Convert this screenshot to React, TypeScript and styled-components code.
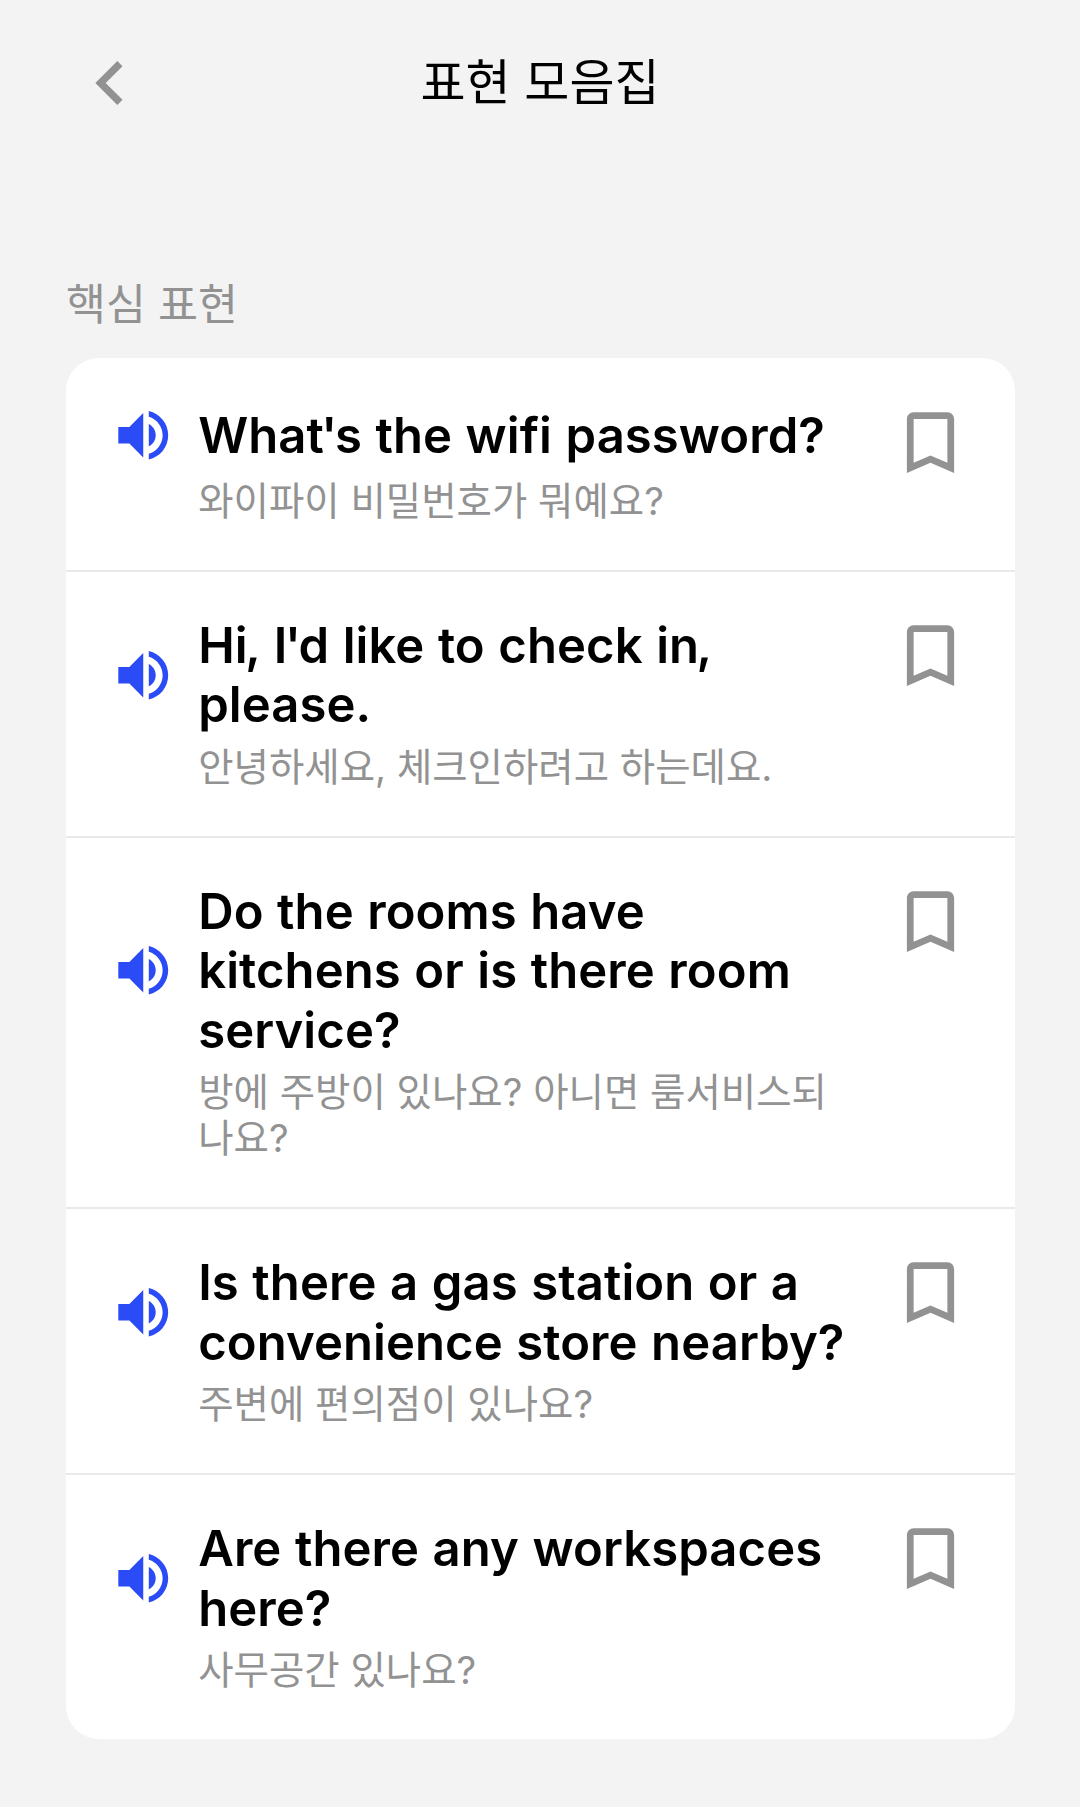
import React from "react";
import styled, { createGlobalStyle } from "styled-components";

const GlobalStyle = createGlobalStyle`
  body {
    margin: 0;
    background: #f3f3f3;
  }
`;

const Screen = styled.div`
  box-sizing: border-box;
  min-height: 1807px;
  background: #f3f3f3;
  font-family: Inter, "Noto Sans CJK KR", sans-serif;
  color: #000;
`;

const Header = styled.header`
  display: grid;
  grid-template-columns: 88px 1fr 88px;
  align-items: center;
  padding: 39px 66px 0;
  height: 88px;
`;

const IconButton = styled.button`
  display: flex;
  padding: 0;
  border: 0;
  background: none;
  color: #929292;
`;

const Icon = styled.svg<{ $size: number }>`
  display: block;
  flex: none;
  width: ${(p) => p.$size}px;
  height: ${(p) => p.$size}px;
  fill: currentColor;
`;

const Title = styled.h1`
  margin: 0;
  font-size: 49px;
  line-height: 60px;
  font-weight: 400;
  text-align: center;
`;

const Section = styled.section`
  padding: 147px 65px 0 66px;
`;

const SectionLabel = styled.h2`
  margin: 0;
  font-size: 43.4px;
  line-height: 60px;
  font-weight: 400;
  color: #929292;
`;

const Card = styled.ul`
  margin: 24px 0 0;
  padding: 0;
  list-style: none;
  background: #fff;
  border-radius: 33px;
`;

const Row = styled.li`
  display: flex;
  align-items: flex-start;
  justify-content: space-between;
  padding: 44.1px 44px 46.3px 43.7px;

  & + & {
    border-top: 2px solid #e9e9e9;
    padding-top: 43.1px;
  }
`;

const Phrase = styled.div`
  display: grid;
  grid-template-columns: 66.5px 654px;
  column-gap: 22px;
  align-items: center;
`;

const PlayButton = styled(IconButton)`
  color: #2a4bf6;
`;

const English = styled.div`
  box-sizing: border-box;
  display: flex;
  align-items: center;
  min-height: 65px;
  padding-top: 1px;
  font-size: 49px;
  line-height: 59.2px;
  font-weight: 600;
  letter-spacing: 0.08px;
  word-spacing: 1.1px;
`;

const Mark = styled.span<{ $after: number }>`
  margin-left: -2.6px;
  margin-right: ${(p) => p.$after}px;
`;

const Korean = styled.div`
  grid-column: 2;
  margin-top: 9.2px;
  font-size: 38.45px;
  line-height: 46px;
  color: #929292;
`;

const paths = {
  back: "M15.41 7.41 14 6l-6 6 6 6 1.41-1.41L10.83 12z",
  speaker:
    "M3 9v6h4l5 5V4L7 9H3zm13.5 3c0-1.77-1.02-3.29-2.5-4.03v8.05c1.48-.73 2.5-2.25 2.5-4.02zM14 3.23v2.06c2.89.86 5 3.54 5 6.71s-2.11 5.85-5 6.71v2.06c4.01-.91 7-4.49 7-8.77s-2.99-7.86-7-8.77z",
  bookmark:
    "M17 3H7c-1.1 0-1.99.9-1.99 2L5 21l7-3 7 3V5c0-1.1-.9-2-2-2zm0 15-5-2.18L7 18V5h10v13z",
};

function Glyph({ name, size }: { name: keyof typeof paths; size: number }) {
  return (
    <Icon $size={size} viewBox="0 0 24 24" aria-hidden="true">
      <path d={paths[name]} />
    </Icon>
  );
}

/* Sets apostrophes and commas tighter than the font's own spacing. */
function Sentence({ text }: { text: string }) {
  return (
    <span>
      {text.split(/([',])/).map((part, i) =>
        part === "'" || part === "," ? (
          <Mark key={i} $after={part === "'" ? -2.5 : -0.5}>
            {part}
          </Mark>
        ) : (
          part
        )
      )}
    </span>
  );
}

const phrases = [
  { en: "What's the wifi password?", ko: "와이파이 비밀번호가 뭐예요?" },
  { en: "Hi, I'd like to check in, please.", ko: "안녕하세요, 체크인하려고 하는데요." },
  {
    en: "Do the rooms have kitchens or is there room service?",
    ko: "방에 주방이 있나요? 아니면 룸서비스되나요?",
  },
  { en: "Is there a gas station or a convenience store nearby?", ko: "주변에 편의점이 있나요?" },
  { en: "Are there any workspaces here?", ko: "사무공간 있나요?" },
];

export default function App() {
  return (
    <Screen>
      <GlobalStyle />
      <Header>
        <IconButton>
          <Glyph name="back" size={88} />
        </IconButton>
        <Title>표현 모음집</Title>
      </Header>
      <Section>
        <SectionLabel>핵심 표현</SectionLabel>
        <Card>
          {phrases.map((p) => (
            <Row key={p.en}>
              <Phrase>
                <PlayButton>
                  <Glyph name="speaker" size={66.5} />
                </PlayButton>
                <English>
                  <Sentence text={p.en} />
                </English>
                <Korean>{p.ko}</Korean>
              </Phrase>
              <IconButton>
                <Glyph name="bookmark" size={81} />
              </IconButton>
            </Row>
          ))}
        </Card>
      </Section>
    </Screen>
  );
}
